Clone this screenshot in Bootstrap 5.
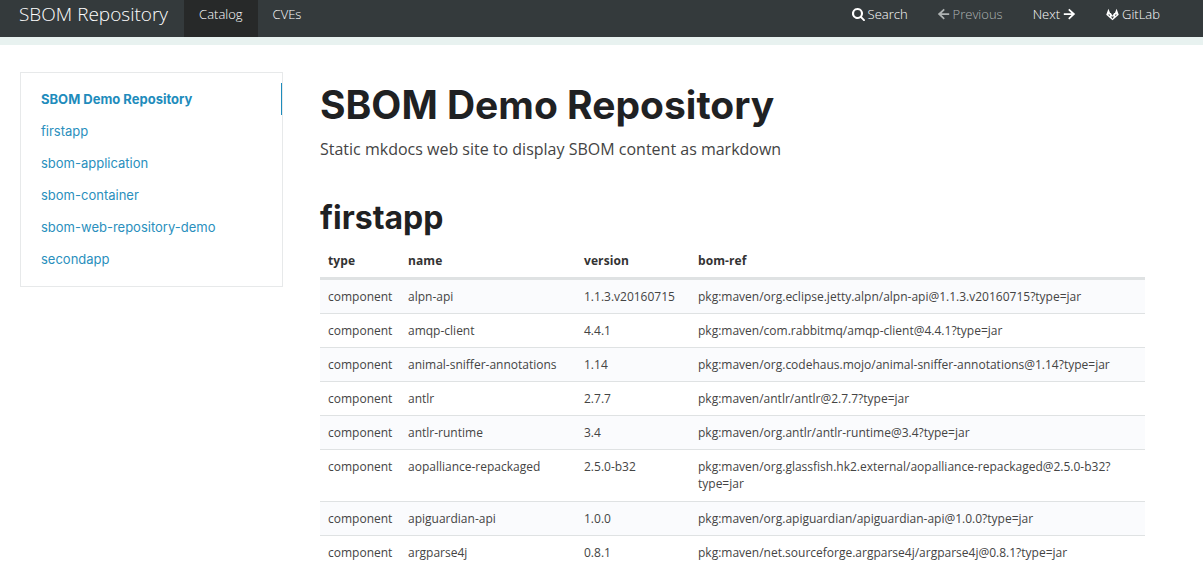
<!DOCTYPE html>
<html lang="en"><head><meta charset="utf-8"><title>SBOM Repository</title>
<link href="https://cdn.jsdelivr.net/npm/bootstrap@5.3.0/dist/css/bootstrap.min.css" rel="stylesheet">
<style>
body{font-family:"Open Sans",sans-serif;color:#444;font-size:14px;background:#fff;overflow-x:hidden}
.topbar{height:37px;background:#343a3c;padding:0 19px;border-bottom:0}
.strip{height:8px;background:#e8f2f0}
.brandname{font-size:19px;font-weight:300;color:#fff;line-height:28px;margin-right:16px;text-decoration:none;padding-bottom:9px}
.toplink{display:flex;align-items:center;gap:3px;height:37px;padding:0 15px 8px;color:#fff;font-size:13px;text-decoration:none;font-weight:300}
.toplink.on{background:#272929}
.toplink.off{color:#aeb3b3}
.toplink.srch{margin-right:-1px}
.toplink svg{width:13px;height:13px;fill:currentColor;flex:none}
.layout{padding:27px 58px 0 20px;gap:37px}
.sidebox{width:263px;height:215px;border:1px solid #e7e9ea;padding:11px 0;flex:none;position:relative}
.sidelink{display:block;height:32px;line-height:31px;padding-left:20px;font-family:Inter,sans-serif;font-size:13px;color:#2a8fbd;text-decoration:none}
.sidelink.cur{font-weight:700;color:#1e8cbc;line-height:30px}
.sidemark{position:absolute;right:0;top:10px;width:1px;height:32px;background:#1e8cbc}
.mainarea{flex:1;min-width:0}
.pagetitle{font-family:Inter,sans-serif;font-weight:700;font-size:39px;line-height:48px;color:#1f2123;margin:9px 0 8px}
.subtitle{font-size:16px;line-height:24px;color:#444;margin:0 0 37px}
.sectitle{font-family:Inter,sans-serif;font-weight:700;font-size:32px;line-height:40px;color:#1f2123;margin:0 0 7px}
.sbomtable{font-size:12px;line-height:17px;margin:0;color:#444;--bs-table-color:#444;table-layout:fixed;width:825px}
.sbomtable th{font-weight:700;padding:7px 8px 8px;border-bottom:3px solid #dfe2e3;color:#333;letter-spacing:.1px}
.sbomtable td{padding:8px;border-bottom:1px solid #dfe2e3}
.sbomtable tbody tr:nth-child(odd) td{background:#fafbfd}
.sbomtable tr.tallrow td{padding-bottom:9px}
.c1{width:80px}.c2{width:176px}.c3{width:114px}
</style></head><body>
<nav class="topbar d-flex align-items-center">
<a class="brandname" href="#">SBOM Repository</a>
<a class="toplink on" href="#">Catalog</a>
<a class="toplink" href="#">CVEs</a>
<div class="ms-auto d-flex">
<a class="toplink srch" href="#"><svg viewBox="0 0 16 16"><path d="M6.8 0a6.8 6.8 0 0 1 5.5 10.7l3.3 3.3a1.2 1.2 0 0 1-1.7 1.7l-3.3-3.3A6.8 6.8 0 1 1 6.8 0zm0 2.6a4.2 4.2 0 1 0 0 8.4 4.2 4.2 0 0 0 0-8.4z"/></svg>Search</a>
<a class="toplink off" href="#"><svg viewBox="0 0 16 16"><path d="M8.2 1l1.4 1.4-4 4H15v2.2H5.6l4 4L8.2 14 1 7.5z"/></svg>Previous</a>
<a class="toplink" href="#">Next<svg viewBox="0 0 16 16"><path d="M7.8 1L6.4 2.4l4 4H1v2.2h9.4l-4 4L7.8 14 15 7.5z"/></svg></a>
<a class="toplink" href="#"><svg viewBox="0 0 16 16"><path d="M3 1l2 5.3h1L8 9.5l2-3.2h1L13 1l2.7 7.2L8 15 .3 8.2z M8 13.2l1.9-2.8H6.1z M2.6 8.2l2.6 2.1-1-2.6z M13.4 8.2l-2.6 2.1 1-2.6z" fill-rule="evenodd"/></svg>GitLab</a>
<span class="d-block" style="width:9px"></span>
</div>
</nav>
<div class="strip"></div>
<div class="layout d-flex">
<aside class="sidebox">
<span class="sidemark"></span>
<a class="sidelink cur" href="#">SBOM Demo Repository</a>
<a class="sidelink" href="#">firstapp</a>
<a class="sidelink" href="#">sbom-application</a>
<a class="sidelink" href="#">sbom-container</a>
<a class="sidelink" href="#">sbom-web-repository-demo</a>
<a class="sidelink" href="#">secondapp</a>
</aside>
<main class="mainarea">
<h1 class="pagetitle">SBOM Demo Repository</h1>
<p class="subtitle">Static mkdocs web site to display SBOM content as markdown</p>
<h2 class="sectitle">firstapp</h2>
<table class="table sbomtable">
<thead><tr><th class="c1">type</th><th class="c2">name</th><th class="c3">version</th><th>bom-ref</th></tr></thead>
<tbody>
<tr><td>component</td><td>alpn-api</td><td>1.1.3.v20160715</td><td>pkg:maven/org.eclipse.jetty.alpn/alpn-api@1.1.3.v20160715?type=jar</td></tr>
<tr><td>component</td><td>amqp-client</td><td>4.4.1</td><td>pkg:maven/com.rabbitmq/amqp-client@4.4.1?type=jar</td></tr>
<tr><td>component</td><td>animal-sniffer-annotations</td><td>1.14</td><td>pkg:maven/org.codehaus.mojo/animal-sniffer-annotations@1.14?type=jar</td></tr>
<tr><td>component</td><td>antlr</td><td>2.7.7</td><td>pkg:maven/antlr/antlr@2.7.7?type=jar</td></tr>
<tr><td>component</td><td>antlr-runtime</td><td>3.4</td><td>pkg:maven/org.antlr/antlr-runtime@3.4?type=jar</td></tr>
<tr class="tallrow"><td>component</td><td>aopalliance-repackaged</td><td>2.5.0-b32</td><td>pkg:maven/org.glassfish.hk2.external/aopalliance-repackaged@2.5.0-b32?type=jar</td></tr>
<tr><td>component</td><td>apiguardian-api</td><td>1.0.0</td><td>pkg:maven/org.apiguardian/apiguardian-api@1.0.0?type=jar</td></tr>
<tr><td>component</td><td>argparse4j</td><td>0.8.1</td><td>pkg:maven/net.sourceforge.argparse4j/argparse4j@0.8.1?type=jar</td></tr>
</tbody></table>
</main>
</div>
</body></html>
